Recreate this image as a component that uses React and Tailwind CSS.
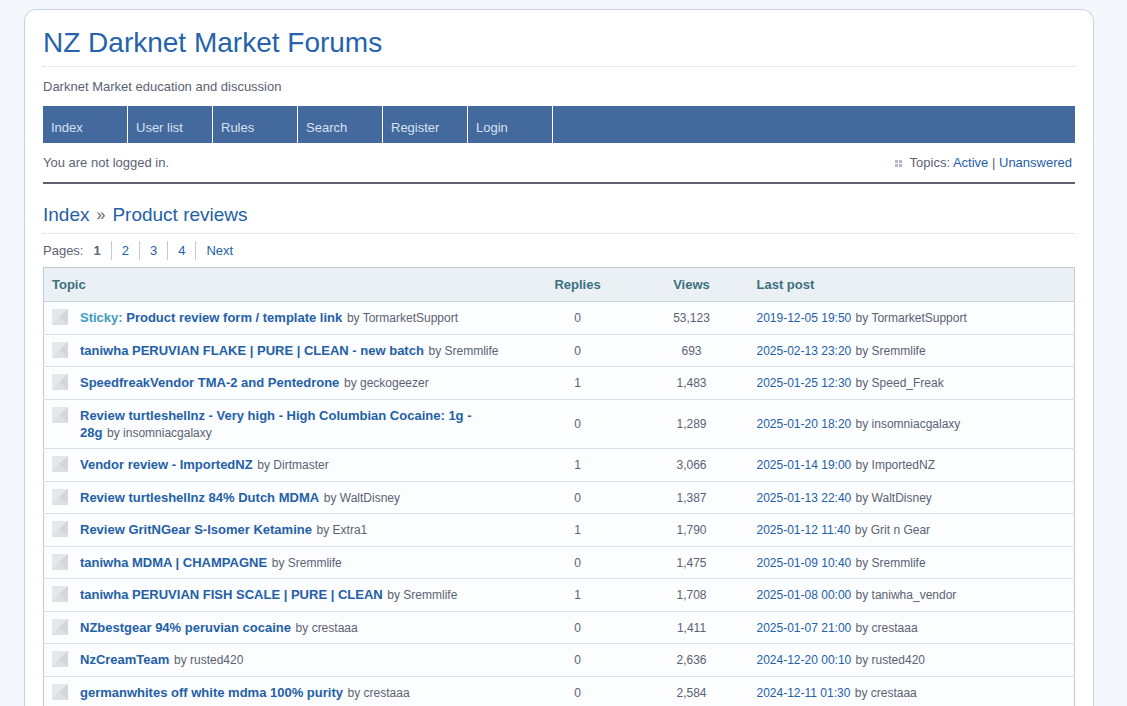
import React from "react";

const navItems = ["Index", "User list", "Rules", "Search", "Register", "Login"];

const pages = ["2", "3", "4", "Next"];

const topics = [
  { sticky: true, title: "Product review form / template link", author: "TormarketSupport", replies: "0", views: "53,123", date: "2019-12-05 19:50", lastBy: "TormarketSupport" },
  { title: "taniwha PERUVIAN FLAKE | PURE | CLEAN - new batch", author: "Sremmlife", replies: "0", views: "693", date: "2025-02-13 23:20", lastBy: "Sremmlife" },
  { title: "SpeedfreakVendor TMA-2 and Pentedrone", author: "geckogeezer", replies: "1", views: "1,483", date: "2025-01-25 12:30", lastBy: "Speed_Freak" },
  { title: "Review turtleshellnz - Very high - High Columbian Cocaine: 1g - 28g", author: "insomniacgalaxy", replies: "0", views: "1,289", date: "2025-01-20 18:20", lastBy: "insomniacgalaxy" },
  { title: "Vendor review - ImportedNZ", author: "Dirtmaster", replies: "1", views: "3,066", date: "2025-01-14 19:00", lastBy: "ImportedNZ" },
  { title: "Review turtleshellnz 84% Dutch MDMA", author: "WaltDisney", replies: "0", views: "1,387", date: "2025-01-13 22:40", lastBy: "WaltDisney" },
  { title: "Review GritNGear S-Isomer Ketamine", author: "Extra1", replies: "1", views: "1,790", date: "2025-01-12 11:40", lastBy: "Grit n Gear" },
  { title: "taniwha MDMA | CHAMPAGNE", author: "Sremmlife", replies: "0", views: "1,475", date: "2025-01-09 10:40", lastBy: "Sremmlife" },
  { title: "taniwha PERUVIAN FISH SCALE | PURE | CLEAN", author: "Sremmlife", replies: "1", views: "1,708", date: "2025-01-08 00:00", lastBy: "taniwha_vendor" },
  { title: "NZbestgear 94% peruvian cocaine", author: "crestaaa", replies: "0", views: "1,411", date: "2025-01-07 21:00", lastBy: "crestaaa" },
  { title: "NzCreamTeam", author: "rusted420", replies: "0", views: "2,636", date: "2024-12-20 00:10", lastBy: "rusted420" },
  { title: "germanwhites off white mdma 100% purity", author: "crestaaa", replies: "0", views: "2,584", date: "2024-12-11 01:30", lastBy: "crestaaa" }
];

const linkClass = "text-[#2460a7] hover:underline";

function TopicIcon() {
  return (
    <svg className="mr-3 h-4 w-4 shrink-0" viewBox="0 0 16 16" aria-hidden="true">
      <rect width="16" height="16" fill="#e5e7ea" />
      <path d="M16 0V16L7 8Z" fill="#d3d7dc" />
      <path d="M0 16L7 8L16 16Z" fill="#dddfe3" />
    </svg>
  );
}

function GridIcon() {
  return (
    <svg className="mr-2 h-[7px] w-[7px]" viewBox="0 0 7 7" fill="#b3bac6" shapeRendering="crispEdges" aria-hidden="true">
      <path d="M0 0h3v3H0zM4 0h3v3H4zM0 4h3v3H0zM4 4h3v3H4z" />
    </svg>
  );
}

function TopicRow({ topic }) {
  return (
    <tr className="border-b border-[#d9e1ec] odd:h-[33px] even:h-8">
      <td className="py-[7px] pr-4 pl-2 align-top">
        <div className="flex">
          <TopicIcon />
          <div className="leading-[17px]">
            <span className="font-bold">
              {topic.sticky ? <span className="text-[#3d9bc1]">Sticky: </span> : null}
              <a href="#" className={linkClass}>
                {topic.title}
              </a>
            </span>
            {"\u00a0"}
            <span className="ml-px text-xs leading-4">by {topic.author}</span>
          </div>
        </div>
      </td>
      <td className="text-center text-xs">{topic.replies}</td>
      <td className="text-center text-xs">{topic.views}</td>
      <td className="pl-2 text-xs">
        <a href="#" className={linkClass}>
          {topic.date}
        </a>{" "}
        <span className="ml-px">by {topic.lastBy}</span>
      </td>
    </tr>
  );
}

export default function App() {
  return (
    <div className="min-h-screen bg-[#f4f8fc] pt-[9px] pr-[33px] pl-6 font-['Liberation_Sans',Arial,sans-serif] text-[13px] leading-4 text-[#5c6274]">
      <div className="rounded-t-xl border border-b-0 border-[#c8d3df] bg-white px-[18px]">
        <header>
          <h1 className="border-b border-dotted border-[#ccd3dc] pt-[17px] pb-[7px] text-[28px] leading-8">
            <a href="#" className="text-[#2563ad]">
              NZ Darknet Market Forums
            </a>
          </h1>
          <p className="pt-3 pb-[11px]">Darknet Market education and discussion</p>
          <nav className="bg-[#44699c]">
            <ul className="flex">
              {navItems.map(item => (
                <li key={item} className="w-[85px] border-r border-white">
                  <a href="#" className="block px-2 pt-[14px] pb-[7px] text-[#d5e2f4]">
                    {item}
                  </a>
                </li>
              ))}
            </ul>
          </nav>
          <div className="flex items-center justify-between border-b-2 border-[#5c6072] pt-3 pr-[3px] pb-[11px]">
            <p>You are not logged in.</p>
            <p className="flex items-center">
              <GridIcon />
              <span>
                Topics:{" "}
                <a href="#" className={linkClass}>
                  Active
                </a>{" "}
                |{" "}
                <a href="#" className={linkClass}>
                  Unanswered
                </a>
              </span>
            </p>
          </div>
        </header>

        <main className="pt-[19px]">
          <h2 className="flex gap-[7px] border-b border-dotted border-[#ccd3dc] pb-[6px] text-[19px] leading-6">
            <a href="#" className={linkClass}>
              Index
            </a>
            <span className="text-base leading-6">»</span>
            <a href="#" className={linkClass}>
              Product reviews
            </a>
          </h2>

          <div className="flex py-[7px] leading-[19px]">
            <span className="pr-[10px]">Pages:</span>
            <strong className="pr-[10px]">1</strong>
            {pages.map(page => (
              <a
                key={page}
                href="#"
                className="border-l border-[#c0cad6] px-[10px] text-[#2460a7]"
              >
                {page}
              </a>
            ))}
          </div>

          <table className="w-full table-fixed border-collapse border-x border-t border-[#c0cad6]">
            <thead>
              <tr className="h-[34px] border-b border-[#c8d3df] bg-[#ebf0f4] text-[#3c7080]">
                <th className="pl-2 text-left">Topic</th>
                <th className="w-[114px]">Replies</th>
                <th className="w-[114px]">Views</th>
                <th className="w-[326px] pl-2 text-left">Last post</th>
              </tr>
            </thead>
            <tbody className="bg-[#fbfdfe]">
              {topics.map(topic => (
                <TopicRow key={topic.title} topic={topic} />
              ))}
            </tbody>
          </table>
        </main>
      </div>
    </div>
  );
}
